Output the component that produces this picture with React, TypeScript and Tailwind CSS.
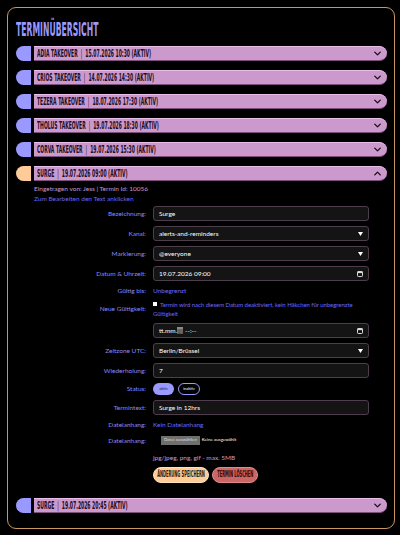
import { ChevronDown, ChevronUp } from "lucide-react";

interface Termin {
  title: string;
  when: string;
  open?: boolean;
}

const termine: Termin[] = [
  { title: "ADIA TAKEOVER", when: "15.07.2026 10:30 (AKTIV)" },
  { title: "CRIOS TAKEOVER", when: "14.07.2026 14:30 (AKTIV)" },
  { title: "TEZERA TAKEOVER", when: "18.07.2026 17:30 (AKTIV)" },
  { title: "THOLUS TAKEOVER", when: "19.07.2026 18:30 (AKTIV)" },
  { title: "CORVA TAKEOVER", when: "19.07.2026 15:30 (AKTIV)" },
  { title: "SURGE", when: "19.07.2026 09:00 (AKTIV)", open: true },
];

const condensed = { fontFamily: '"DejaVu Sans Condensed", "DejaVu Sans", sans-serif' };
const body = { fontFamily: 'Lato, "Open Sans", sans-serif' };

function TerminBar({ termin }: { termin: Termin }) {
  const Chevron = termin.open ? ChevronUp : ChevronDown;
  return (
    <div className="flex h-[15px] gap-[3px]">
      {/* LCARS elbow cap */}
      <div
        className={`w-[15px] rounded-l-full ${termin.open ? "bg-[#ffcc99]" : "bg-[#9999ff]"}`}
      />
      <div className="flex flex-1 items-center overflow-hidden rounded-r-full border-t border-t-[#e9bde9] border-b border-b-[#7d4f7d] bg-[#cc99cc] pr-[4px] pl-[3px]">
        <span
          style={condensed}
          className="inline-block flex-1 origin-left scale-x-[0.48] whitespace-nowrap text-[10.5px] font-bold leading-none text-[#1b0c1b]"
        >
          {termin.title} <span className="mx-[3px] font-normal">|</span> {termin.when}
        </span>
        <Chevron size={11} strokeWidth={3} className="text-[#1b0c1b]" />
      </div>
    </div>
  );
}

function Field({ label, children, h = "h-[15px]" }: { label: string; children: React.ReactNode; h?: string }) {
  return (
    <div className={`flex ${h} items-center gap-[7px]`}>
      <div className="w-[112px] text-right text-[6.5px] text-[#8a8aff]">{label}</div>
      <div className="flex h-full w-[216px] items-center">{children}</div>
    </div>
  );
}

function Box({ children, icon }: { children?: React.ReactNode; icon?: "select" | "date" }) {
  return (
    <div className="flex h-full w-full items-center rounded-[3px] border border-[#4d3d4d] bg-[#141414] px-[5px] text-[6.5px] text-white">
      <span className="flex-1">{children}</span>
      {icon === "select" && (
        <svg width="5" height="4" viewBox="0 0 5 4">
          <path d="M0 0h5L2.5 4z" fill="#fff" />
        </svg>
      )}
      {icon === "date" && (
        <svg width="6" height="6" viewBox="0 0 6 6">
          <rect x="0.5" y="0.5" width="5" height="5" rx="0.8" fill="none" stroke="#ddd" strokeWidth="1" />
          <rect x="0.5" y="0.5" width="5" height="1.6" fill="#ddd" />
        </svg>
      )}
    </div>
  );
}

export default function App() {
  return (
    <div className="min-h-screen bg-black pt-[7px] pl-[7px]" style={body}>
      <div className="h-[522px] w-[388px] rounded-[9px] border border-[#c8965f] pt-[12px] pr-[7px] pl-[8px]">
        <h1
          style={condensed}
          className="mb-[8px] origin-left scale-x-[0.45] whitespace-nowrap text-[19px] font-bold leading-[18px] text-[#9999ff]"
        >
          TERMINÜBERSICHT
        </h1>

        <div className="flex flex-col gap-[9px]">
          {termine.map((t) => (
            <TerminBar key={t.title + t.when} termin={t} />
          ))}
        </div>

        {/* Details of the opened entry */}
        <div className="pl-[18px]">
          <div className="mt-[3px] h-[10px] text-[6.5px] leading-[10px] text-[#cc99cc]">
            Eingetragen von: Jess | Termin Id: 10056
          </div>
          <div className="h-[10px] text-[6.5px] leading-[10px] text-[#6666ff]">
            Zum Bearbeiten den Text anklicken
          </div>

          <div className="mt-[2px] flex flex-col gap-[5px]">
            <Field label="Bezeichnung:">
              <Box>Surge</Box>
            </Field>
            <Field label="Kanal:">
              <Box icon="select">alerts-and-reminders</Box>
            </Field>
            <Field label="Markierung:">
              <Box icon="select">@everyone</Box>
            </Field>
            <Field label="Datum &amp; Uhrzeit:">
              <Box icon="date">19.07.2026 09:00</Box>
            </Field>
            <Field label="Gültig bis:" h="h-[9px]">
              <span className="text-[6.5px] text-[#6a6aff]">Unbegrenzt</span>
            </Field>
            <Field label="Neue Gültigkeit:" h="h-[18px]">
              <p className="text-[6px] leading-[9px] tracking-[-0.05px] text-[#6a6aff]">
                <span className="mr-[3px] inline-block h-[4px] w-[4px] bg-white align-[1px]" />
                Termin wird nach diesem Datum deaktiviert, kein Häkchen für unbegrenzte Gültigkeit
              </p>
            </Field>
            <Field label="">
              <Box icon="date">
                tt.mm.<span className="bg-[#8a8a8a] text-[#222]">jjjj</span> --:--
              </Box>
            </Field>
            <Field label="Zeitzone UTC:">
              <Box icon="select">Berlin/Brüssel</Box>
            </Field>
            <Field label="Wiederholung:">
              <Box>7</Box>
            </Field>
            <Field label="Status:" h="h-[12px]">
              <div className="flex h-full gap-[4px]">
                <span className="flex w-[21px] items-center justify-center rounded-full bg-[#9999ff] text-[4px] text-[#222]">
                  aktiv
                </span>
                <span className="flex w-[22px] items-center justify-center rounded-full border border-[#9999ff] text-[4px] text-white">
                  inaktiv
                </span>
              </div>
            </Field>
            <Field label="Termintext:">
              <Box>Surge in 12hrs</Box>
            </Field>
            <Field label="Dateianhang:" h="h-[10px]">
              <span className="text-[6.5px] text-[#6a6aff]">Kein Dateianhang</span>
            </Field>
            <Field label="Dateianhang:" h="h-[11px]">
              <div className="ml-[8px] flex items-center gap-[2px] text-[4.5px]">
                <span className="bg-[#6f6f6f] px-[3px] py-[1px] text-[#ddd]">Datei auswählen</span>
                <span className="text-white">Keine ausgewählt</span>
              </div>
            </Field>
            <Field label="" h="h-[13px]">
              <span className="text-[6.5px] text-[#cc99cc]">jpg/jpeg, png, gif - max. 5MB</span>
            </Field>
          </div>

          <div className="mt-[3px] ml-[119px] flex h-[16px] gap-[3px]">
            <button
              style={condensed}
              className="flex w-[56px] items-center justify-center overflow-hidden rounded-full border border-[#ffe0b8] bg-[#ffcc99] text-[#2a1a0a]"
            >
              <span className="scale-x-[0.45] whitespace-nowrap text-[9px] font-bold">ÄNDERUNG SPEICHERN</span>
            </button>
            <button
              style={condensed}
              className="flex w-[46px] items-center justify-center overflow-hidden rounded-full border border-[#e08a8a] bg-[#cc6666] text-[#2a0a0a]"
            >
              <span className="scale-x-[0.45] whitespace-nowrap text-[9px] font-bold">TERMIN LÖSCHEN</span>
            </button>
          </div>
        </div>

        <div className="mt-[15px]">
          <TerminBar termin={{ title: "SURGE", when: "19.07.2026 20:45 (AKTIV)" }} />
        </div>
      </div>
    </div>
  );
}
